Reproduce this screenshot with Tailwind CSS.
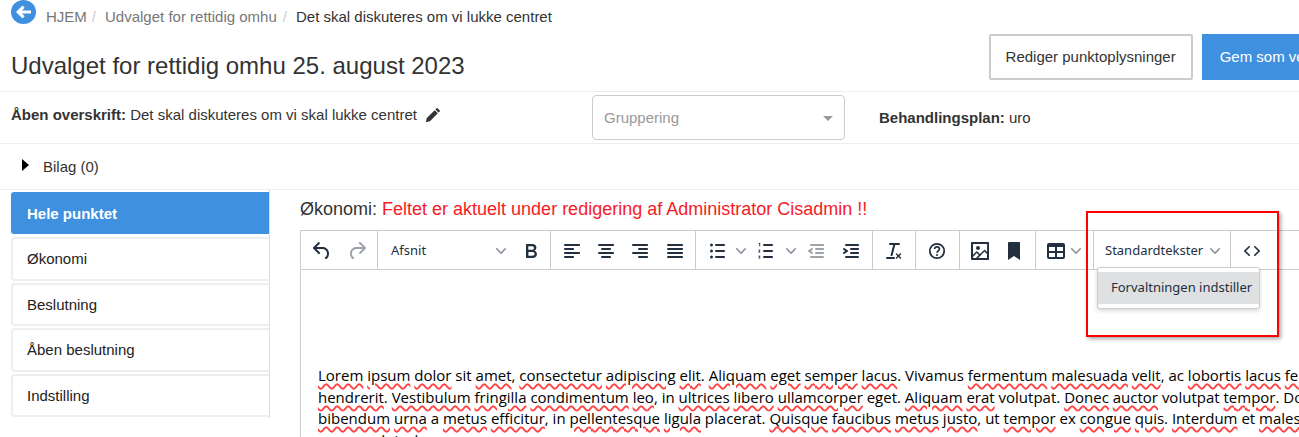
<!doctype html>
<html lang="da">
<head>
<meta charset="utf-8">
<title>Udvalget for rettidig omhu</title>
<script src="https://cdn.jsdelivr.net/npm/@tailwindcss/browser@4"></script>
</head>
<body class="bg-white">
<div class="relative w-[1299px] h-[437px] overflow-hidden bg-white text-[#333] text-[15px] font-['Liberation_Sans',sans-serif]">

  <!-- breadcrumb -->
  <div class="flex items-start h-[34px] pl-[11px]">
    <svg class="w-[25px] h-6 shrink-0" viewBox="0 0 25 24"><ellipse cx="12.500" cy="12" rx="12.500" ry="12" fill="#3f90df"/><path d="M5 12l6.500-6.500 2.200 2.200-2.700 2.700h9v3.200h-9l2.700 2.700-2.200 2.200z" fill="#fff"/></svg>
    <nav class="flex ml-[10px] mt-[8px] leading-[17px] text-[#777] whitespace-nowrap">
      <span>HJEM</span><span class="ml-[5px] text-[#ccc]">/</span>
      <span class="ml-[9px]">Udvalget for rettidig omhu</span><span class="ml-[6px] text-[#ccc]">/</span>
      <span class="ml-[9px] text-[#333]">Det skal diskuteres om vi lukke centret</span>
    </nav>
  </div>

  <!-- title row -->
  <div class="flex h-[58px] pl-[11px] border-b border-[#eee]">
    <h1 class="mt-[18px] text-2xl leading-[28px] whitespace-nowrap">Udvalget for rettidig omhu 25. august 2023</h1>
    <div class="flex ml-[524px] shrink-0">
      <button class="w-[204px] h-[46px] border-2 border-[#ccc] rounded-[2px] bg-white">Rediger punktoplysninger</button>
      <button class="w-[140px] h-[46px] ml-[9px] bg-[#3f90df] text-white text-left pl-[18px] whitespace-nowrap overflow-hidden">Gem som version</button>
    </div>
  </div>

  <!-- meta row -->
  <div class="flex h-[52px] pl-[11px] border-b border-[#eee]">
    <p class="w-[581px] mt-[14px] leading-[18px] whitespace-nowrap flex items-start">
      <span><b>Åben overskrift:</b> Det skal diskuteres om vi skal lukke centret</span>
      <svg class="w-[16px] h-[16px] ml-[8px] mt-[1px]" viewBox="0 0 16 16"><path d="M12.100.8l3.100 3.100-1.700 1.700-3.100-3.100zM9.700 3.200l3.100 3.100-7.900 7.900-4.100 1 1-4.100z" fill="#333"/></svg>
    </p>
    <div class="flex items-center w-[253px] h-[45px] mt-[3px] pt-[2px] px-[11px] border border-[#ccc] rounded-[4px] text-[#999] shrink-0">
      <span>Gruppering</span>
      <span class="ml-auto w-0 h-0 border-x-[5px] border-x-transparent border-t-[5px] border-t-[#999]"></span>
    </div>
    <p class="ml-[34px] mt-[17px] leading-[18px] whitespace-nowrap"><b>Behandlingsplan:</b> uro</p>
  </div>

  <!-- attachments row -->
  <div class="flex items-start h-[46px] pl-[22px] border-b border-[#eee]">
    <span class="mt-[15px] w-0 h-0 border-y-[6px] border-y-transparent border-l-[7px] border-l-black"></span>
    <span class="ml-[14px] mt-[14px] leading-[18px]">Bilag (0)</span>
  </div>

  <!-- body -->
  <div class="flex pl-[11px]">
    <!-- side menu -->
    <aside class="w-[259px] h-[228px] pt-[2px] border-r border-[#ddd] shrink-0 flex flex-col">
      <a class="flex items-center h-[42px] pt-[2px] pl-[16px] bg-[#3f90df] text-white font-bold rounded-l-[3px]">Hele punktet</a>
      <a class="flex items-center h-[44px] mt-[3px] pl-[14px] border-2 border-r-0 border-[#eee] rounded-l-[4px] text-[#222]">Økonomi</a>
      <a class="flex items-center h-[43px] mt-[2px] pt-[2px] pl-[14px] border-2 border-r-0 border-[#eee] rounded-l-[4px] text-[#222]">Beslutning</a>
      <a class="flex items-center h-[44px] mt-[2px] pl-[14px] border-2 border-r-0 border-[#eee] rounded-l-[4px] text-[#222]">Åben beslutning</a>
      <a class="flex items-center h-[43px] mt-[2px] pt-[2px] pl-[14px] border-2 border-r-0 border-[#eee] rounded-l-[4px] text-[#222]">Indstilling</a>
    </aside>

    <!-- editor column -->
    <main class="ml-[30px] w-[1100px] shrink-0">
      <h2 class="mt-[8px] h-[22px] text-[18px] leading-[22px] whitespace-nowrap">Økonomi: <span class="text-[#f51b25]">Feltet er aktuelt under redigering af Administrator Cisadmin !!</span></h2>
      <div class="mt-[10px] border-t border-l border-[#ccc] font-['Noto_Sans',sans-serif] text-[#222f3e]">
        <!-- toolbar -->
        <div class="flex h-[39px] border-b border-[#ccc] items-center">
          <div class="flex items-center w-[77px] h-full pt-[2px] pl-[9px] border-r border-[#ccc]">
            <svg class="w-6 h-6" viewBox="0 0 24 24" fill="#222f3e"><path d="M6.400 8H12c3.700 0 6.200 2 6.800 5.100.6 2.700-.4 5.600-2.300 6.800a1 1 0 0 1-1-1.800c1.100-.6 1.800-2.700 1.400-4.600-.5-2.100-2.100-3.500-4.900-3.500H6.400l3.300 3.300a1 1 0 1 1-1.400 1.400l-5-5a1 1 0 0 1 0-1.400l5-5a1 1 0 0 1 1.400 1.400L6.400 8z"/></svg>
            <svg class="w-6 h-6 ml-[11px]" viewBox="0 0 24 24" fill="#9da3ab"><path d="M17.600 10H12c-2.800 0-4.400 1.400-4.900 3.500-.4 2 .3 4 1.400 4.600a1 1 0 1 1-1 1.800c-2-1.200-2.900-4.100-2.300-6.800.6-3 3-5.100 6.800-5.100h5.600l-3.300-3.300a1 1 0 1 1 1.400-1.400l5 5a1 1 0 0 1 0 1.400l-5 5a1 1 0 0 1-1.400-1.400l3.300-3.300z"/></svg>
          </div>
          <div class="flex items-center w-[173px] h-full pt-[2px] pl-[13px] border-r border-[#ccc]">
            <span class="w-[36px] text-[13px]">Afsnit</span>
            <svg class="w-[10px] h-[10px] ml-[69px] shrink-0" viewBox="0 0 10 10" fill="#8f969e"><path d="M8.700 2.200c.3-.3.800-.3 1 0 .4.400.4.900 0 1.200L5.700 7.800c-.3.300-.9.300-1.200 0L.2 3.400a.8.800 0 0 1 0-1.200c.3-.3.800-.3 1.100 0L5 6l3.700-3.800z"/></svg>
            <svg class="w-6 h-6 ml-[13px]" viewBox="0 0 24 24" fill="#222f3e"><path d="M7.800 19c-.3 0-.5 0-.6-.2l-.2-.5V5.700c0-.2 0-.4.200-.5l.6-.2h5c1.500 0 2.700.3 3.500 1 .7.600 1.100 1.400 1.100 2.500a3 3 0 0 1-.6 1.900c-.4.600-1 1-1.600 1.200.4.100.9.300 1.300.6s.8.700 1 1.200c.3.400.4 1 .4 1.600 0 1.300-.4 2.300-1.300 3-.8.700-2.100 1-3.800 1H7.800zm5-8.300c.6 0 1.200-.1 1.600-.5.400-.3.600-.7.600-1.300 0-1.100-.8-1.700-2.300-1.700H9.300v3.500h3.400zm.5 6c.7 0 1.300-.1 1.700-.4.400-.4.600-.9.600-1.500s-.2-1-.7-1.400c-.4-.3-1-.4-2-.4H9.400v3.800h4z"/></svg>
          </div>
          <div class="flex items-center w-[145px] h-full pt-[2px] pl-[9px] gap-[10.200px] border-r border-[#ccc]">
            <svg class="w-6 h-6" viewBox="0 0 24 24" fill="#222f3e"><path d="M5 5h14c.6 0 1 .4 1 1s-.4 1-1 1H5a1 1 0 1 1 0-2zm0 4h8c.6 0 1 .4 1 1s-.4 1-1 1H5a1 1 0 1 1 0-2zm0 8h8c.6 0 1 .4 1 1s-.4 1-1 1H5a1 1 0 0 1 0-2zm0-4h14c.6 0 1 .4 1 1s-.4 1-1 1H5a1 1 0 0 1 0-2z"/></svg>
            <svg class="w-6 h-6" viewBox="0 0 24 24" fill="#222f3e"><path d="M5 5h14c.6 0 1 .4 1 1s-.4 1-1 1H5a1 1 0 1 1 0-2zm3 4h8c.6 0 1 .4 1 1s-.4 1-1 1H8a1 1 0 1 1 0-2zm0 8h8c.6 0 1 .4 1 1s-.4 1-1 1H8a1 1 0 0 1 0-2zm-3-4h14c.6 0 1 .4 1 1s-.4 1-1 1H5a1 1 0 0 1 0-2z"/></svg>
            <svg class="w-6 h-6" viewBox="0 0 24 24" fill="#222f3e"><path d="M5 5h14c.6 0 1 .4 1 1s-.4 1-1 1H5a1 1 0 1 1 0-2zm6 4h8c.6 0 1 .4 1 1s-.4 1-1 1h-8a1 1 0 0 1 0-2zm0 8h8c.6 0 1 .4 1 1s-.4 1-1 1h-8a1 1 0 0 1 0-2zm-6-4h14c.6 0 1 .4 1 1s-.4 1-1 1H5a1 1 0 0 1 0-2z"/></svg>
            <svg class="w-6 h-6" viewBox="0 0 24 24" fill="#222f3e"><path d="M5 5h14c.6 0 1 .4 1 1s-.4 1-1 1H5a1 1 0 1 1 0-2zm0 4h14c.6 0 1 .4 1 1s-.4 1-1 1H5a1 1 0 1 1 0-2zm0 4h14c.6 0 1 .4 1 1s-.4 1-1 1H5a1 1 0 0 1 0-2zm0 4h14c.6 0 1 .4 1 1s-.4 1-1 1H5a1 1 0 0 1 0-2z"/></svg>
          </div>
          <div class="flex items-center w-[177px] h-full pt-[2px] pl-[9px] border-r border-[#ccc]">
            <svg class="w-6 h-6" viewBox="0 0 24 24" fill="#222f3e"><path d="M11 5h8c.6 0 1 .4 1 1s-.4 1-1 1h-8a1 1 0 0 1 0-2zm0 6h8c.6 0 1 .4 1 1s-.4 1-1 1h-8a1 1 0 0 1 0-2zm0 6h8c.6 0 1 .4 1 1s-.4 1-1 1h-8a1 1 0 0 1 0-2z"/><circle cx="6.500" cy="6" r="1.500"/><circle cx="6.500" cy="12" r="1.500"/><circle cx="6.500" cy="18" r="1.500"/></svg>
            <svg class="w-[10px] h-[10px] ml-[7px]" viewBox="0 0 10 10" fill="#8f969e"><path d="M8.700 2.200c.3-.3.800-.3 1 0 .4.400.4.900 0 1.200L5.700 7.800c-.3.300-.9.300-1.200 0L.2 3.400a.8.800 0 0 1 0-1.200c.3-.3.800-.3 1.100 0L5 6l3.700-3.800z"/></svg>
            <svg class="w-6 h-6 ml-[8px]" viewBox="0 0 24 24" fill="#222f3e"><path d="M10 17h8c.6 0 1 .4 1 1s-.4 1-1 1h-8a1 1 0 0 1 0-2zm0-6h8c.6 0 1 .4 1 1s-.4 1-1 1h-8a1 1 0 0 1 0-2zm0-6h8c.6 0 1 .4 1 1s-.4 1-1 1h-8a1 1 0 1 1 0-2z"/><path d="M5 4h1.200v3.500H5.300V4.900H4.700V4.300zM4.300 11.500c0-.7.500-1 1-1 .6 0 1 .3 1 .9 0 .5-.3.800-.9 1.300h.9v.7H4.300v-.6l1-.9c.2-.2.200-.3.200-.5 0-.1-.1-.2-.2-.2-.2 0-.3.100-.3.300zM4.300 16.700h2v.6l-.6.600c.5.100.7.400.7.800 0 .6-.5.900-1.100.9-.5 0-.8-.1-1-.3l.3-.6c.2.100.4.200.7.200.2 0 .3-.1.300-.2 0-.2-.2-.3-.7-.3v-.5l.5-.4H4.300z"/></svg>
            <svg class="w-[10px] h-[10px] ml-[8px]" viewBox="0 0 10 10" fill="#8f969e"><path d="M8.700 2.200c.3-.3.800-.3 1 0 .4.400.4.900 0 1.200L5.700 7.800c-.3.300-.9.300-1.200 0L.2 3.400a.8.800 0 0 1 0-1.200c.3-.3.800-.3 1.100 0L5 6l3.700-3.800z"/></svg>
            <svg class="w-6 h-6 ml-[8px]" viewBox="0 0 24 24" fill="#9da3ab"><path d="M7 5h12c.6 0 1 .4 1 1s-.4 1-1 1H7a1 1 0 1 1 0-2zm5 4h7c.6 0 1 .4 1 1s-.4 1-1 1h-7a1 1 0 0 1 0-2zm0 4h7c.6 0 1 .4 1 1s-.4 1-1 1h-7a1 1 0 0 1 0-2zm-5 4h12a1 1 0 0 1 0 2H7a1 1 0 0 1 0-2zm1.600-3.800a1 1 0 0 1-1.200 1.600l-3-2a1 1 0 0 1 0-1.600l3-2a1 1 0 0 1 1.200 1.600L6.800 12l1.800 1.200z"/></svg>
            <svg class="w-6 h-6 ml-[11px]" viewBox="0 0 24 24" fill="#222f3e"><path d="M7 5h12c.6 0 1 .4 1 1s-.4 1-1 1H7a1 1 0 1 1 0-2zm5 4h7c.6 0 1 .4 1 1s-.4 1-1 1h-7a1 1 0 0 1 0-2zm0 4h7c.6 0 1 .4 1 1s-.4 1-1 1h-7a1 1 0 0 1 0-2zm-5 4h12a1 1 0 0 1 0 2H7a1 1 0 0 1 0-2zm-2.600-3.800L6.200 12l-1.800-1.200a1 1 0 0 1 1.200-1.600l3 2a1 1 0 0 1 0 1.600l-3 2a1 1 0 1 1-1.200-1.600z"/></svg>
          </div>
          <div class="flex items-center justify-center w-[43px] h-full pt-[2px] border-r border-[#ccc]">
            <svg class="w-6 h-6" viewBox="0 0 24 24" fill="#222f3e"><path d="M13.200 6a1 1 0 0 1 0 .2l-2.600 10a1 1 0 0 1-1 .8h-.2a.8.800 0 0 1-.8-1l2.600-10H8a1 1 0 1 1 0-2h9a1 1 0 0 1 0 2h-3.800zM5 18h7a1 1 0 0 1 0 2H5a1 1 0 0 1 0-2zm13 1.500L16.500 18 15 19.500a.7.700 0 0 1-1-1l1.500-1.500-1.500-1.500a.7.700 0 0 1 1-1l1.500 1.500 1.500-1.500a.7.700 0 0 1 1 1L17.500 17l1.500 1.500a.7.700 0 0 1-1 1z"/></svg>
          </div>
          <div class="flex items-center justify-center w-[44px] h-full pt-[2px] pr-[2px] border-r border-[#ccc]">
            <svg class="w-6 h-6" viewBox="0 0 24 24" fill="none" stroke="#222f3e"><circle cx="12" cy="12" r="7.200" stroke-width="1.700"/><path d="M9.600 10.100c0-1.500 1.100-2.300 2.400-2.300s2.400.8 2.400 2.100c0 1.900-2.400 1.900-2.400 3.800" stroke-width="1.700"/><circle cx="12" cy="16" r="1" fill="#222f3e" stroke="none"/></svg>
          </div>
          <div class="flex items-center w-[76px] h-full pt-[2px] pl-[8px] gap-[10px] border-r border-[#ccc]">
            <svg class="w-6 h-6" viewBox="0 0 24 24" fill="#222f3e"><path fill-rule="nonzero" d="M5 15.700l3.300-3.200c.3-.3.700-.3 1 0L12 15l4.100-4c.3-.4.800-.4 1 0l2 1.900V5H5v10.700zM5 18V19h3l2.800-2.900-2-2L5 17.900zm14-3l-2.500-2.400-6.400 6.500H19v-4zM4 3h16c.6 0 1 .4 1 1v16c0 .6-.4 1-1 1H4a1 1 0 0 1-1-1V4c0-.6.4-1 1-1zm6 8a2 2 0 1 0 0-4 2 2 0 0 0 0 4z"/></svg>
            <svg class="w-6 h-6" viewBox="0 0 24 24" fill="#222f3e"><path d="M6 4v17l6-4 6 4V4c0-.6-.4-1-1-1H7a1 1 0 0 0-1 1z"/></svg>
          </div>
          <div class="flex items-center w-[58px] h-full pt-[2px] pl-[8px] border-r border-[#ccc]">
            <svg class="w-6 h-6" viewBox="0 0 24 24" fill="#222f3e"><path d="M19 4a2 2 0 0 1 2 2v12a2 2 0 0 1-2 2H5a2 2 0 0 1-2-2V6c0-1.100.9-2 2-2h14zM5 14v4h6v-4H5zm14 0h-6v4h6v-4zm0-6h-6v4h6V8zM5 12h6V8H5v4z"/></svg>
            <svg class="w-[10px] h-[10px] ml-[3px]" viewBox="0 0 10 10" fill="#8f969e"><path d="M8.700 2.200c.3-.3.800-.3 1 0 .4.400.4.900 0 1.200L5.700 7.800c-.3.300-.9.300-1.200 0L.2 3.400a.8.800 0 0 1 0-1.200c.3-.3.800-.3 1.100 0L5 6l3.700-3.800z"/></svg>
          </div>
          <div class="relative flex items-center w-[137px] h-full pt-[2px] pl-[11px] border-r border-[#ccc]">
            <span class="text-[13px] whitespace-nowrap">Standardtekster</span>
            <svg class="w-[10px] h-[10px] ml-[7px] shrink-0" viewBox="0 0 10 10" fill="#8f969e"><path d="M8.700 2.200c.3-.3.800-.3 1 0 .4.400.4.900 0 1.200L5.700 7.800c-.3.300-.9.300-1.200 0L.2 3.400a.8.800 0 0 1 0-1.200c.3-.3.800-.3 1.100 0L5 6l3.700-3.800z"/></svg>
            <!-- open dropdown -->
            <div class="absolute left-[3px] top-[36px] z-10 w-[163px] h-[42px] py-[4px] bg-white border border-[#ccc] rounded-[3px] shadow-[0_2px_4px_rgba(0,0,0,0.15)]">
              <div class="flex items-center h-[32px] pl-[13px] bg-[#dee0e2] text-[13px] whitespace-nowrap">Forvaltningen indstiller</div>
            </div>
          </div>
          <div class="flex items-center h-full pt-[2px] pl-[9px]">
            <svg class="w-6 h-6" viewBox="0 0 24 24" fill="#222f3e"><path d="M9.800 15.700c.3.300.3.800 0 1-.3.400-.9.400-1.200 0l-4.400-4.100a.8.800 0 0 1 0-1.200l4.400-4.200c.3-.3.900-.3 1.200 0 .3.300.3.800 0 1.100L6 12l3.800 3.700zm4.400 0c-.3.300-.3.800 0 1 .3.400.9.400 1.200 0l4.400-4.100a.8.800 0 0 0 0-1.200l-4.400-4.200a.8.800 0 0 0-1.200 0c-.3.300-.3.800 0 1.100L18 12l-3.800 3.700z"/></svg>
          </div>
        </div>
        <!-- content -->
        <div class="pt-[95px] pl-[17px] text-[15px] leading-[21.600px] text-black whitespace-nowrap font-['Open_Sans',sans-serif] [&_u]:decoration-wavy [&_u]:decoration-[#f44] [&_u]:decoration-[1.5px] [&_u]:underline-offset-[2px]">
          <p><u>Lorem</u> <u>ipsum</u> <u>dolor</u> sit <u>amet</u>, <u>consectetur</u> <u>adipiscing</u> <u>elit</u>. <u>Aliquam</u> <u>eget</u> <u>semper</u> <u>lacus</u>. Vivamus <u>fermentum</u> <u>malesuada</u> <u>velit</u>, ac <u>lobortis</u> <u>lacus</u> <u>felis</u></p>
          <p><u>hendrerit</u>. <u>Vestibulum</u> <u>fringilla</u> <u>condimentum</u> <u>leo</u>, in <u>ultrices</u> <u>libero</u> <u>ullamcorper</u> eget. <u>Aliquam</u> <u>erat</u> volutpat. <u>Donec</u> <u>auctor</u> volutpat <u>tempor</u>. Donec</p>
          <p><u>bibendum</u> <u>urna</u> a <u>metus</u> <u>efficitur</u>, in <u>pellentesque</u> <u>ligula</u> placerat. <u>Quisque</u> <u>faucibus</u> <u>metus</u> <u>justo</u>, ut <u>tempor</u> ex <u>congue</u> <u>quis</u>. <u>Interdum</u> et <u>malesuada</u></p>
          <p>nunc ac dui a lacus</p>
        </div>
      </div>
    </main>
  </div>

  <!-- annotation frame -->
  <div class="absolute left-[1086px] top-[211px] w-[193px] h-[126px] border-2 border-[#f00] shadow-[2px_2px_4px_rgba(0,0,0,0.35)] pointer-events-none"></div>
</div>
</body>
</html>
